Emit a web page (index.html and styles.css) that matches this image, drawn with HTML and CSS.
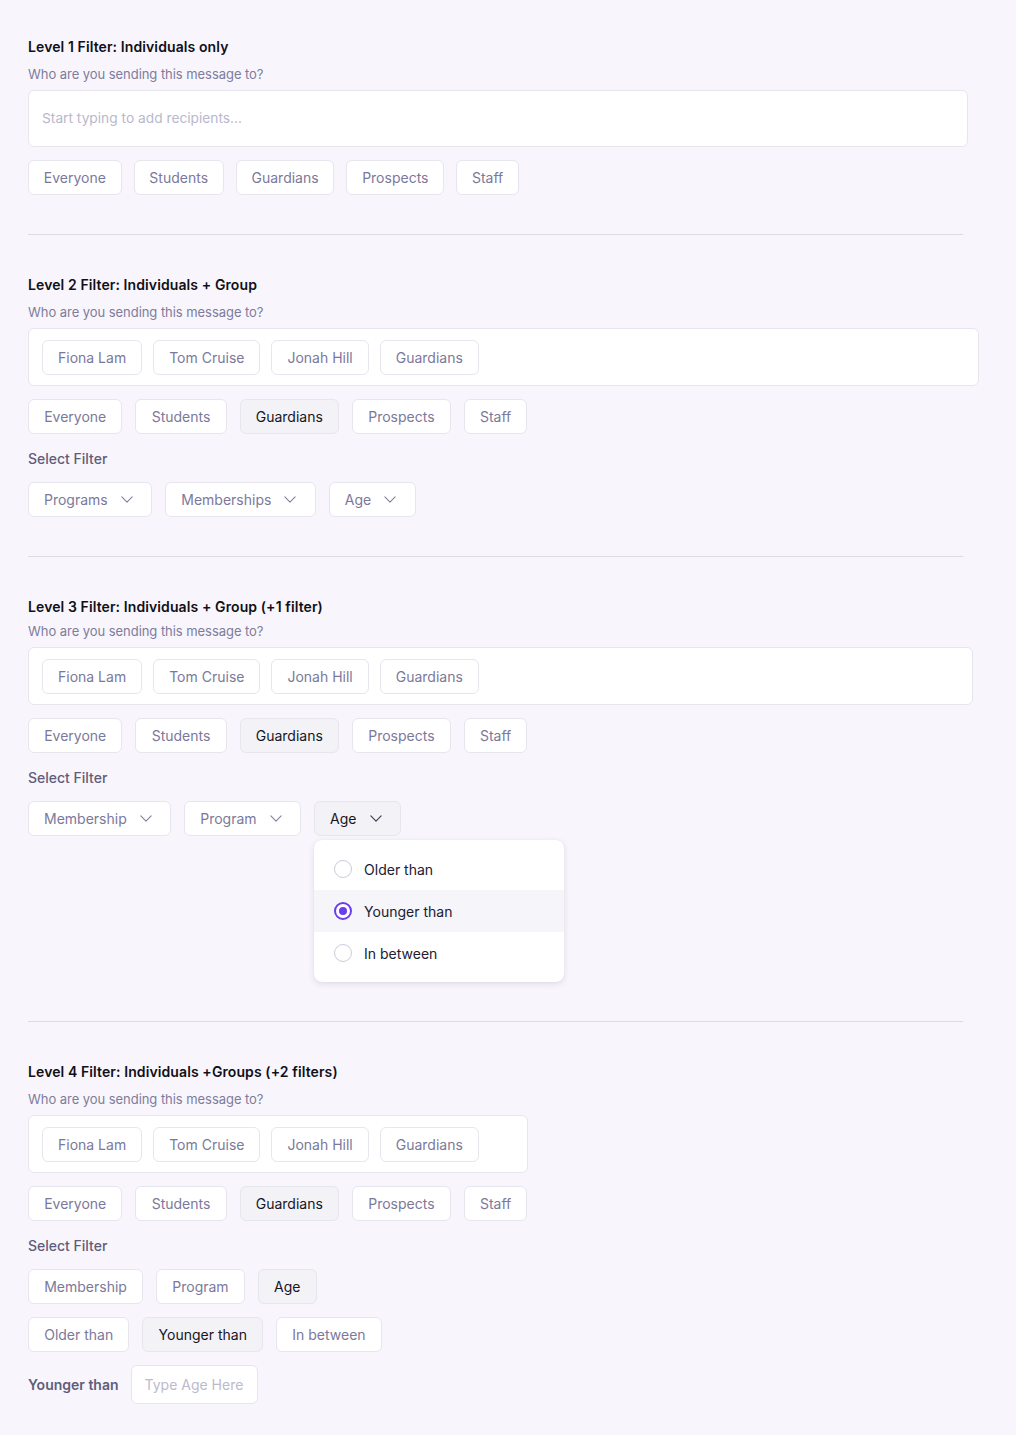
FILE: index.html
```html
<!DOCTYPE html>
<html lang="en">
<head>
  <meta charset="UTF-8" />
  <meta name="viewport" content="width=device-width, initial-scale=1.0"/>
  <title>Recipient Filters</title>
  <link rel="stylesheet" href="styles.css">
</head>
<body>

  <!-- Level 1 -->
  <section class="level">
    <h2>Level 1 Filter: Individuals only</h2>
    <p class="prompt">Who are you sending this message to?</p>
    <input type="text" class="recipients recipients-input level1-box" placeholder="Start typing to add recipients...">
    <div class="chip-row compact">
      <button class="chip">Everyone</button>
      <button class="chip">Students</button>
      <button class="chip">Guardians</button>
      <button class="chip">Prospects</button>
      <button class="chip">Staff</button>
    </div>
  </section>

  <hr class="divider">

  <!-- Level 2 -->
  <section class="level">
    <h2>Level 2 Filter: Individuals + Group</h2>
    <p class="prompt">Who are you sending this message to?</p>
    <div class="recipients level2-box">
      <span class="chip">Fiona Lam</span>
      <span class="chip">Tom Cruise</span>
      <span class="chip">Jonah Hill</span>
      <span class="chip">Guardians</span>
    </div>
    <div class="chip-row">
      <button class="chip">Everyone</button>
      <button class="chip">Students</button>
      <button class="chip active">Guardians</button>
      <button class="chip">Prospects</button>
      <button class="chip">Staff</button>
    </div>
    <p class="filter-label">Select Filter</p>
    <div class="chip-row">
      <button class="chip select">Programs <svg class="chev" viewBox="0 0 14 8"><path d="M1 1l6 6 6-6"/></svg></button>
      <button class="chip select">Memberships <svg class="chev" viewBox="0 0 14 8"><path d="M1 1l6 6 6-6"/></svg></button>
      <button class="chip select">Age <svg class="chev" viewBox="0 0 14 8"><path d="M1 1l6 6 6-6"/></svg></button>
    </div>
  </section>

  <hr class="divider">

  <!-- Level 3 -->
  <section class="level">
    <h2>Level 3 Filter: Individuals + Group (+1 filter)</h2>
    <p class="prompt tight">Who are you sending this message to?</p>
    <div class="recipients level3-box">
      <span class="chip">Fiona Lam</span>
      <span class="chip">Tom Cruise</span>
      <span class="chip">Jonah Hill</span>
      <span class="chip">Guardians</span>
    </div>
    <div class="chip-row">
      <button class="chip">Everyone</button>
      <button class="chip">Students</button>
      <button class="chip active">Guardians</button>
      <button class="chip">Prospects</button>
      <button class="chip">Staff</button>
    </div>
    <p class="filter-label">Select Filter</p>
    <div class="chip-row top">
      <button class="chip select">Membership <svg class="chev" viewBox="0 0 14 8"><path d="M1 1l6 6 6-6"/></svg></button>
      <button class="chip select">Program <svg class="chev" viewBox="0 0 14 8"><path d="M1 1l6 6 6-6"/></svg></button>
      <div class="dropdown">
        <button class="chip select active">Age <svg class="chev" viewBox="0 0 14 8"><path d="M1 1l6 6 6-6"/></svg></button>
        <ul class="menu">
          <li><span class="radio"></span>Older than</li>
          <li class="current"><span class="radio checked"></span>Younger than</li>
          <li><span class="radio"></span>In between</li>
        </ul>
      </div>
    </div>
  </section>

  <hr class="divider">

  <!-- Level 4 -->
  <section class="level">
    <h2>Level 4 Filter: Individuals +Groups (+2 filters)</h2>
    <p class="prompt">Who are you sending this message to?</p>
    <div class="recipients level4-box">
      <span class="chip">Fiona Lam</span>
      <span class="chip">Tom Cruise</span>
      <span class="chip">Jonah Hill</span>
      <span class="chip">Guardians</span>
    </div>
    <div class="chip-row">
      <button class="chip">Everyone</button>
      <button class="chip">Students</button>
      <button class="chip active">Guardians</button>
      <button class="chip">Prospects</button>
      <button class="chip">Staff</button>
    </div>
    <p class="filter-label">Select Filter</p>
    <div class="chip-row">
      <button class="chip">Membership</button>
      <button class="chip">Program</button>
      <button class="chip active">Age</button>
    </div>
    <div class="chip-row">
      <button class="chip">Older than</button>
      <button class="chip active">Younger than</button>
      <button class="chip">In between</button>
    </div>
    <div class="age-row">
      <label for="age" class="age-label">Younger than</label>
      <input type="text" id="age" class="age-input" placeholder="Type Age Here">
    </div>
  </section>

</body>
</html>
```

FILE: styles.css
```css
* {
  box-sizing: border-box;
  font-family: 'Inter', 'Noto Sans', sans-serif;
}

body {
  margin: 0;
  padding: 37px 28px 40px;
  background: #f8f6fc;
  color: #131320;
  min-height: 1435px;
}

.level {
  display: flex;
  flex-direction: column;
  align-items: flex-start;
}

h2 {
  margin: 0 0 8px;
  font-size: 14px;
  line-height: 20px;
  font-weight: 600;
  letter-spacing: 0.1px;
  color: #101018;
}

.prompt {
  margin: 0 0 7px;
  font-size: 13px;
  line-height: 18px;
  letter-spacing: -0.05px;
  color: #7e7c9b;
}

.prompt.tight {
  margin-top: -3px;
}

.divider {
  width: 935px;
  margin: 39px 0 40px;
  border: none;
  border-top: 1px solid #dddbe5;
}

/* recipient box */
.recipients {
  background: #fff;
  border: 1px solid #e7e5ee;
  border-radius: 6px;
  display: flex;
  gap: 11px;
  padding: 11px 13px 10px;
}

.recipients-input {
  height: 57px;
  padding: 0 13px 2px;
  font-size: 13.75px;
  color: #333;
  outline: none;
}

.recipients-input::placeholder {
  color: #bab8cc;
}

.level1-box { width: 940px; }
.level2-box { width: 951px; }
.level3-box { width: 945px; }
.level4-box { width: 500px; }

/* chips */
.chip-row {
  display: flex;
  gap: 13px;
  margin-top: 13px;
}

.chip-row.compact {
  gap: 12px;
}

.chip-row.top {
  align-items: flex-start;
}

.chip {
  display: inline-flex;
  align-items: center;
  height: 35px;
  padding: 0 15.2px;
  background: #fff;
  border: 1px solid #e7e5ee;
  border-radius: 6px;
  font-size: 14px;
  color: #7b799a;
  cursor: pointer;
  white-space: nowrap;
}

.chip-row.compact .chip {
  padding: 0 14.75px;
}

.recipients .chip {
  height: 35px;
  padding: 0 15px;
  border-radius: 6px;
}

.chip.active {
  background: #f3f2f7;
  color: #16161f;
}

.chip.select {
  gap: 13px;
  padding: 0 18.5px 0 15px;
}

.chev {
  width: 12px;
  height: 7px;
  fill: none;
  stroke: #8280a0;
  stroke-width: 1.3;
  stroke-linecap: round;
  stroke-linejoin: round;
}

.chip.active .chev {
  stroke: #3a3a4a;
}

.filter-label {
  margin: 15px 0 0;
  font-size: 14px;
  line-height: 20px;
  font-weight: 500;
  color: #5f5d7b;
}

/* dropdown */
.dropdown {
  display: flex;
  flex-direction: column;
  align-items: flex-start;
  gap: 4px;
}

.menu {
  list-style: none;
  margin: 0;
  padding: 8px 0;
  width: 250px;
  background: #fff;
  border-radius: 8px;
  box-shadow: 0 2px 6px rgba(40, 30, 80, 0.12), 0 0 1px rgba(40, 30, 80, 0.1);
}

.menu li {
  display: flex;
  align-items: center;
  gap: 12px;
  height: 42px;
  padding: 0 20px;
  font-size: 14px;
  color: #202030;
}

.menu li.current {
  background: #f6f5f9;
}

.radio {
  width: 18px;
  height: 18px;
  border-radius: 50%;
  border: 1px solid #cdcadb;
  background: #fff;
}

.radio.checked {
  border: 2px solid #6b3ded;
  display: flex;
  align-items: center;
  justify-content: center;
}

.radio.checked::after {
  content: "";
  width: 8px;
  height: 8px;
  border-radius: 50%;
  background: #6b3ded;
}

/* age input */
.age-row {
  display: flex;
  align-items: center;
  gap: 12px;
  margin-top: 13px;
}

.age-label {
  font-size: 14px;
  font-weight: 600;
  color: #5f5d7b;
}

.age-input {
  width: 127px;
  height: 39px;
  padding: 0 13px;
  background: #fff;
  border: 1px solid #e7e5ee;
  border-radius: 6px;
  font-size: 14px;
  outline: none;
}

.age-input::placeholder {
  color: #bcbacd;
}
```
